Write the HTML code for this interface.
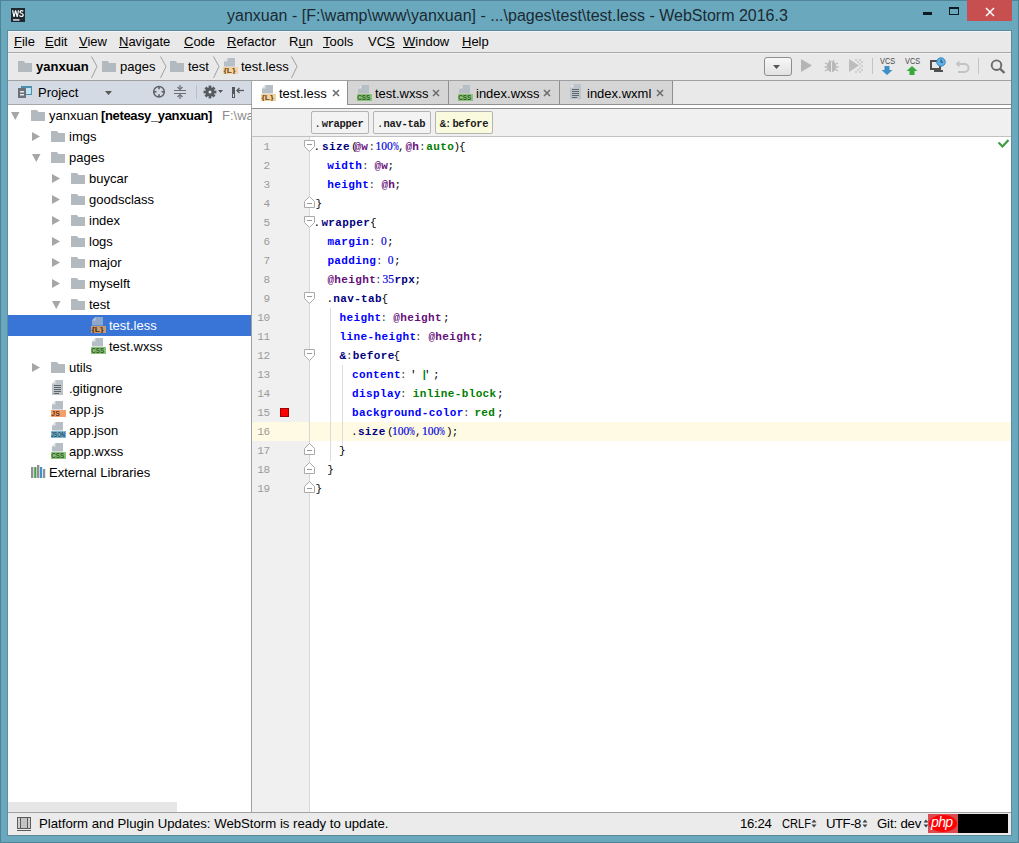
<!DOCTYPE html>
<html><head><meta charset="utf-8">
<style>
*{margin:0;padding:0;box-sizing:border-box}
html,body{width:1019px;height:843px;overflow:hidden;background:#6aa6c2;font-family:"Liberation Sans",sans-serif;font-size:13px;color:#000}
.a{position:absolute}
.t{position:absolute;white-space:pre;line-height:16px}
#frame{left:0;top:0;width:1019px;height:843px;background:#69a8bd;border:1px solid #4f8398}
#inner{left:7px;top:30px;width:1005px;height:806px;border:1px solid #5d8b9d}
#title{left:227px;top:6px;font-size:16px;color:#1c2a33;line-height:20px}
#menubar{left:8px;top:31px;width:1003px;height:22px;background:#e9e9e9;border-bottom:1px solid #a8a8a8;box-shadow:inset 0 1px 0 #eef5f8}
#menubar span{position:absolute;top:3px;line-height:16px}
#navbar{left:8px;top:53px;width:1003px;height:28px;background:#e9e9e9;border-bottom:1px solid #a0a0a0;box-shadow:inset 0 1px 0 #f3f3f3}
#proj{left:8px;top:81px;width:244px;height:24px;background:#d4dae4;border-bottom:1px solid #a8a8a8;border-right:1px solid #a8a8a8}
#tree{left:8px;top:105px;width:243px;height:707px;background:#fff}
#tabs{left:251px;top:81px;width:760px;height:27px;background:#ebebeb;border-left:1px solid #a8a8a8}
#crumbs{left:251px;top:108px;width:760px;height:29px;background:#f2f2f2;border-top:1px solid #a8a8a8;border-bottom:1px solid #c6c6c6;border-left:1px solid #a8a8a8}
#editor{left:251px;top:137px;width:760px;height:675px;background:#fff;border-left:1px solid #a0a0a0}
#gutter{left:252px;top:137px;width:57px;height:675px;background:#f0f0f0;border-right:1px solid #d5d5d5}
#status{left:8px;top:812px;width:1003px;height:23px;background:#ebebeb;border-top:1px solid #a0a0a0}
</style></head><body>
<div id="frame" class="a"></div><div id="inner" class="a"></div>
<div id="title" class="t">yanxuan - [F:\wamp\www\yanxuan] - ...\pages\test\test.less - WebStorm 2016.3</div>

<svg class="a" style="left:11px;top:8px" width="14" height="14" viewBox="0 0 14 14"><rect width="14" height="14" fill="#1d2830"/><path d="M1 2.2L2.4 9H3.6L4.6 4.8L5.6 9H6.8L8.1 2.2H6.9L6.2 6.6L5.2 2.2H4L3 6.6L2.3 2.2Z" fill="#fff"/><path d="M12.6 2.8C12 2.3 11.3 2.1 10.6 2.1C9.4 2.1 8.5 2.8 8.5 3.9C8.5 5 9.4 5.4 10.4 5.7C11.2 5.9 11.6 6.2 11.6 6.8C11.6 7.5 11 7.9 10.4 7.9C9.7 7.9 9.1 7.6 8.6 7.1L8 8.1C8.6 8.7 9.5 9.1 10.4 9.1C11.8 9.1 12.8 8.3 12.8 6.9C12.8 5.7 12 5.2 10.9 4.9C10.1 4.7 9.7 4.4 9.7 3.9C9.7 3.4 10.1 3.2 10.6 3.2C11.1 3.2 11.6 3.4 12 3.7Z" fill="#fff"/><rect x="2" y="11.3" width="6.5" height="1.3" fill="#fff"/></svg>
<div class="a" style="left:923px;top:12px;width:9px;height:3px;background:#0d1a22"></div>
<div class="a" style="left:949px;top:7px;width:10px;height:8px;border:1px solid #0d1a22;border-top-width:2px"></div>
<div class="a" style="left:967px;top:0px;width:45px;height:21px;background:#c74f4f"></div>
<svg class="a" style="left:984px;top:6px" width="12" height="12" viewBox="0 0 12 12"><path d="M2 2L10 10M10 2L2 10" stroke="#fff" stroke-width="1.5"/></svg>
<div id="menubar" class="a">
<span style="left:6px"><u>F</u>ile</span>
<span style="left:37px"><u>E</u>dit</span>
<span style="left:71px"><u>V</u>iew</span>
<span style="left:111px"><u>N</u>avigate</span>
<span style="left:176px"><u>C</u>ode</span>
<span style="left:219px"><u>R</u>efactor</span>
<span style="left:281px">R<u>u</u>n</span>
<span style="left:315px"><u>T</u>ools</span>
<span style="left:360px">VC<u>S</u></span>
<span style="left:395px"><u>W</u>indow</span>
<span style="left:454px"><u>H</u>elp</span>
</div>
<div id="navbar" class="a"></div>
<svg class="a" style="left:18px;top:61px" width="14" height="11" viewBox="0 0 14 11"><path d="M0 0H6L7 2H14V11H0Z" fill="#b2b9bf"/></svg><div class="t" style="left:36px;top:59px;font-weight:bold;font-size:13px">yanxuan</div><svg class="a" style="left:91px;top:56px" width="7" height="23" viewBox="0 0 7 23"><path d="M0.5 0.5L6 10.5L0.5 22" stroke="#a0a0a0" stroke-width="1" fill="none"/></svg><svg class="a" style="left:102px;top:61px" width="14" height="11" viewBox="0 0 14 11"><path d="M0 0H6L7 2H14V11H0Z" fill="#b2b9bf"/></svg><div class="t" style="left:120px;top:59px">pages</div><svg class="a" style="left:160px;top:56px" width="7" height="23" viewBox="0 0 7 23"><path d="M0.5 0.5L6 10.5L0.5 22" stroke="#a0a0a0" stroke-width="1" fill="none"/></svg><svg class="a" style="left:170px;top:61px" width="14" height="11" viewBox="0 0 14 11"><path d="M0 0H6L7 2H14V11H0Z" fill="#b2b9bf"/></svg><div class="t" style="left:188px;top:59px">test</div><svg class="a" style="left:213px;top:56px" width="7" height="23" viewBox="0 0 7 23"><path d="M0.5 0.5L6 10.5L0.5 22" stroke="#a0a0a0" stroke-width="1" fill="none"/></svg><!--NAVLESS--><svg class="a" style="left:222px;top:58px" width="17" height="16" viewBox="0 0 17 16"><path d="M5.5 0H13V8.5H2V3.5Z" fill="#b6bec6"/><path d="M2 3.5L5.5 0V3.5Z" fill="#e0e4e7"/><rect x="1" y="9" width="15" height="7" fill="#f4d39f"/><text x="1.5" y="15.2" textLength="12" lengthAdjust="spacingAndGlyphs" font-family="Liberation Sans" font-weight="bold" font-size="7.5" fill="#6b4a1c">{L}</text></svg><!--/NAVLESS--><div class="t" style="left:241px;top:59px">test.less</div><svg class="a" style="left:291px;top:56px" width="7" height="23" viewBox="0 0 7 23"><path d="M0.5 0.5L6 10.5L0.5 22" stroke="#a0a0a0" stroke-width="1" fill="none"/></svg>

<div class="a" style="left:764px;top:57px;width:28px;height:19px;border:1px solid #8d8d8d;border-radius:3px;background:linear-gradient(#f7f7f7,#e2e2e2)"></div>
<svg class="a" style="left:773px;top:65px" width="8" height="5" viewBox="0 0 8 5"><path d="M0 0H7L3.5 4Z" fill="#555"/></svg>
<svg class="a" style="left:801px;top:59px" width="12" height="14" viewBox="0 0 12 14"><path d="M0 0L11 6.5L0 13Z" fill="#b5b5b5"/></svg>
<svg class="a" style="left:824px;top:58px" width="15" height="15" viewBox="0 0 15 15"><ellipse cx="7.5" cy="8.5" rx="4.5" ry="5.5" fill="#b8b8b8"/><path d="M1 5L4 6.5M14 5L11 6.5M0.5 9H3M14.5 9H12M1 13L4 11M14 13L11 11M5 2L6 4M10 2L9 4" stroke="#b8b8b8" stroke-width="1.3"/><path d="M7.5 4V14" stroke="#e6e6e6" stroke-width="1"/></svg>
<svg class="a" style="left:849px;top:58px" width="14" height="15" viewBox="0 0 14 15"><path d="M0 1L10 7.5L0 14Z" fill="#bdbdbd"/><g fill="#cfcfcf"><rect x="6" y="1" width="2" height="2"/><rect x="10" y="1" width="2" height="2"/><rect x="8" y="3" width="2" height="2"/><rect x="12" y="3" width="2" height="2"/><rect x="10" y="5" width="2" height="2"/><rect x="12" y="7" width="2" height="2"/><rect x="10" y="9" width="2" height="2"/><rect x="8" y="11" width="2" height="2"/><rect x="12" y="11" width="2" height="2"/><rect x="6" y="13" width="2" height="2"/><rect x="10" y="13" width="2" height="2"/></g></svg>
<div class="a" style="left:872px;top:58px;width:1px;height:16px;background:#c4c4c4"></div>
<div class="t" style="left:880px;top:56px;font-size:9px;line-height:11px;color:#4a4a4a;transform:scaleX(0.82);transform-origin:0 0">VCS</div>
<svg class="a" style="left:881px;top:66px" width="12" height="9" viewBox="0 0 12 9"><path d="M3.5 0H8.5V4H11.5L6 9L0.5 4H3.5Z" fill="#3e8fc7"/></svg>
<div class="t" style="left:905px;top:56px;font-size:9px;line-height:11px;color:#4a4a4a;transform:scaleX(0.82);transform-origin:0 0">VCS</div>
<svg class="a" style="left:906px;top:66px" width="12" height="9" viewBox="0 0 12 9"><path d="M3.5 9H8.5V5H11.5L6 0L0.5 5H3.5Z" fill="#3aa63e"/></svg>
<svg class="a" style="left:930px;top:57px" width="16" height="16" viewBox="0 0 16 16"><rect x="1" y="4" width="9" height="8" fill="none" stroke="#505050" stroke-width="2"/><rect x="4" y="13" width="9" height="2" fill="#505050"/><circle cx="11" cy="5" r="4.3" fill="#5fb0e6" stroke="#2f7fb8" stroke-width="0.8"/><path d="M11 2.5V5.2H13" stroke="#1d3f5c" stroke-width="0.9" fill="none"/></svg>
<svg class="a" style="left:955px;top:60px" width="15" height="13" viewBox="0 0 15 13"><path d="M4 4H9.5A4 4 0 0 1 9.5 12H3" stroke="#c3c3c3" stroke-width="2" fill="none"/><path d="M0.5 4L4.5 0.5V7.5Z" fill="#c3c3c3"/></svg>
<div class="a" style="left:978px;top:58px;width:1px;height:16px;background:#c4c4c4"></div>
<svg class="a" style="left:990px;top:59px" width="16" height="15" viewBox="0 0 16 15"><circle cx="6.5" cy="6.2" r="4.8" fill="none" stroke="#6a6a6a" stroke-width="1.9"/><path d="M10 9.7L14.5 14" stroke="#6a6a6a" stroke-width="2.4"/></svg>
<div id="proj" class="a"></div>

<svg class="a" style="left:17px;top:85px" width="16" height="14" viewBox="0 0 16 14"><rect x="4.5" y="1.5" width="10" height="8" fill="#bfe3f2" stroke="#4a8fae" stroke-width="1"/><rect x="4.5" y="1" width="10" height="2" fill="#4a8fae"/><rect x="1" y="3" width="8" height="10" fill="#6b7177"/><rect x="3" y="6" width="4" height="1.5" fill="#e8e8e8"/><rect x="3" y="9" width="4" height="1.5" fill="#e8e8e8"/></svg>
<div class="t" style="left:38px;top:85px">Project</div>
<svg class="a" style="left:105px;top:91px" width="8" height="5" viewBox="0 0 8 5"><path d="M0 0H7L3.5 4Z" fill="#555"/></svg>
<svg class="a" style="left:152px;top:85px" width="14" height="14" viewBox="0 0 14 14"><circle cx="7" cy="6.8" r="5.3" fill="none" stroke="#5d6166" stroke-width="1.5"/><path d="M7 1.5V4.3M7 9.3V12.1M1.7 6.8H4.5M9.5 6.8H12.3" stroke="#5d6166" stroke-width="1.6"/></svg>
<svg class="a" style="left:173px;top:84px" width="14" height="16" viewBox="0 0 14 16"><path d="M1 6.5H13M1 9.5H13" stroke="#6a6e73" stroke-width="1.2"/><path d="M7 1V5M7 11V15" stroke="#6a6e73" stroke-width="1.2"/><path d="M4.5 3L7 5.5L9.5 3M4.5 13L7 10.5L9.5 13" stroke="#6a6e73" stroke-width="1.2" fill="none"/></svg>
<div class="a" style="left:196px;top:85px;width:1px;height:14px;background:#b9bfc8"></div>
<svg class="a" style="left:203px;top:85px" width="14" height="14" viewBox="0 0 14 14"><rect x="5.6" y="0.6" width="2.8" height="12.8" fill="#555a5e" transform="rotate(0 7 7)"/><rect x="5.6" y="0.6" width="2.8" height="12.8" fill="#555a5e" transform="rotate(45 7 7)"/><rect x="5.6" y="0.6" width="2.8" height="12.8" fill="#555a5e" transform="rotate(90 7 7)"/><rect x="5.6" y="0.6" width="2.8" height="12.8" fill="#555a5e" transform="rotate(135 7 7)"/><circle cx="7" cy="7" r="4.4" fill="#555a5e"/><circle cx="7" cy="7" r="1.5" fill="#e6e6e6"/></svg>
<svg class="a" style="left:218px;top:90px" width="6" height="4" viewBox="0 0 6 4"><path d="M0 0H5L2.5 3Z" fill="#555"/></svg>
<svg class="a" style="left:231px;top:86px" width="14" height="13" viewBox="0 0 14 13"><rect x="1" y="1" width="3" height="11" fill="#55595d"/><rect x="2" y="8" width="1" height="3" fill="#e0e0e0"/><path d="M6 4.5H13" stroke="#55595d" stroke-width="1.3"/><path d="M8.5 2L6 4.5L8.5 7" stroke="#55595d" stroke-width="1.3" fill="none"/></svg>
<div id="tree" class="a"></div>
<!--TREE--><div class="a" style="left:8px;top:315px;width:243px;height:21px;background:#3875d7"></div><svg class="a" style="left:11px;top:112px" width="10" height="9" viewBox="0 0 10 9"><path d="M0 0H8.5L4.25 8Z" fill="#a6a6a6"/></svg><svg class="a" style="left:31px;top:110px" width="14" height="11" viewBox="0 0 14 11"><path d="M0 0H6L7.5 2H14V11H0Z" fill="#b2b9bf"/></svg><div class="t" style="left:49px;top:108px">yanxuan</div><div class="t" style="left:101px;top:108px;font-weight:bold;letter-spacing:-0.35px">[neteasy_yanxuan]</div><div class="t" style="left:222px;top:108px;color:#8c8c8c">F:\wa</div><svg class="a" style="left:32px;top:132px" width="9" height="10" viewBox="0 0 9 10"><path d="M0 0L8 4.5L0 9Z" fill="#a6a6a6"/></svg><svg class="a" style="left:51px;top:131px" width="14" height="11" viewBox="0 0 14 11"><path d="M0 0H6L7.5 2H14V11H0Z" fill="#b2b9bf"/></svg><div class="t" style="left:69px;top:129px;color:#000">imgs</div><svg class="a" style="left:32px;top:154px" width="10" height="9" viewBox="0 0 10 9"><path d="M0 0H8.5L4.25 8Z" fill="#a6a6a6"/></svg><svg class="a" style="left:51px;top:152px" width="14" height="11" viewBox="0 0 14 11"><path d="M0 0H6L7.5 2H14V11H0Z" fill="#b2b9bf"/></svg><div class="t" style="left:69px;top:150px;color:#000">pages</div><svg class="a" style="left:52px;top:174px" width="9" height="10" viewBox="0 0 9 10"><path d="M0 0L8 4.5L0 9Z" fill="#a6a6a6"/></svg><svg class="a" style="left:71px;top:173px" width="14" height="11" viewBox="0 0 14 11"><path d="M0 0H6L7.5 2H14V11H0Z" fill="#b2b9bf"/></svg><div class="t" style="left:89px;top:171px;color:#000">buycar</div><svg class="a" style="left:52px;top:195px" width="9" height="10" viewBox="0 0 9 10"><path d="M0 0L8 4.5L0 9Z" fill="#a6a6a6"/></svg><svg class="a" style="left:71px;top:194px" width="14" height="11" viewBox="0 0 14 11"><path d="M0 0H6L7.5 2H14V11H0Z" fill="#b2b9bf"/></svg><div class="t" style="left:89px;top:192px;color:#000">goodsclass</div><svg class="a" style="left:52px;top:216px" width="9" height="10" viewBox="0 0 9 10"><path d="M0 0L8 4.5L0 9Z" fill="#a6a6a6"/></svg><svg class="a" style="left:71px;top:215px" width="14" height="11" viewBox="0 0 14 11"><path d="M0 0H6L7.5 2H14V11H0Z" fill="#b2b9bf"/></svg><div class="t" style="left:89px;top:213px;color:#000">index</div><svg class="a" style="left:52px;top:237px" width="9" height="10" viewBox="0 0 9 10"><path d="M0 0L8 4.5L0 9Z" fill="#a6a6a6"/></svg><svg class="a" style="left:71px;top:236px" width="14" height="11" viewBox="0 0 14 11"><path d="M0 0H6L7.5 2H14V11H0Z" fill="#b2b9bf"/></svg><div class="t" style="left:89px;top:234px;color:#000">logs</div><svg class="a" style="left:52px;top:258px" width="9" height="10" viewBox="0 0 9 10"><path d="M0 0L8 4.5L0 9Z" fill="#a6a6a6"/></svg><svg class="a" style="left:71px;top:257px" width="14" height="11" viewBox="0 0 14 11"><path d="M0 0H6L7.5 2H14V11H0Z" fill="#b2b9bf"/></svg><div class="t" style="left:89px;top:255px;color:#000">major</div><svg class="a" style="left:52px;top:279px" width="9" height="10" viewBox="0 0 9 10"><path d="M0 0L8 4.5L0 9Z" fill="#a6a6a6"/></svg><svg class="a" style="left:71px;top:278px" width="14" height="11" viewBox="0 0 14 11"><path d="M0 0H6L7.5 2H14V11H0Z" fill="#b2b9bf"/></svg><div class="t" style="left:89px;top:276px;color:#000">myselft</div><svg class="a" style="left:52px;top:301px" width="10" height="9" viewBox="0 0 10 9"><path d="M0 0H8.5L4.25 8Z" fill="#a6a6a6"/></svg><svg class="a" style="left:71px;top:299px" width="14" height="11" viewBox="0 0 14 11"><path d="M0 0H6L7.5 2H14V11H0Z" fill="#b2b9bf"/></svg><div class="t" style="left:89px;top:297px;color:#000">test</div><svg class="a" style="left:90px;top:317px" width="17" height="16" viewBox="0 0 17 16"><path d="M5.5 0H13V8.5H2V3.5Z" fill="#8ea6cc"/><path d="M2 3.5L5.5 0V3.5Z" fill="#b5c8e8"/><rect x="1" y="9" width="15" height="7" fill="#c79a72"/><text x="1.5" y="15.2" textLength="12" lengthAdjust="spacingAndGlyphs" font-family="Liberation Sans" font-weight="bold" font-size="7.5" fill="#4a2e10">{L}</text></svg><div class="t" style="left:109px;top:318px;color:#fff">test.less</div><svg class="a" style="left:90px;top:338px" width="17" height="16" viewBox="0 0 17 16"><path d="M5.5 0H13V8.5H2V3.5Z" fill="#b6bec6"/><path d="M2 3.5L5.5 0V3.5Z" fill="#e0e4e7"/><rect x="1" y="9" width="15" height="7" fill="#8cc27a"/><text x="1.3" y="15.2" textLength="13" lengthAdjust="spacingAndGlyphs" font-family="Liberation Sans" font-weight="bold" font-size="7.5" fill="#2a5a1e">CSS</text></svg><div class="t" style="left:109px;top:339px;color:#000">test.wxss</div><svg class="a" style="left:32px;top:363px" width="9" height="10" viewBox="0 0 9 10"><path d="M0 0L8 4.5L0 9Z" fill="#a6a6a6"/></svg><svg class="a" style="left:51px;top:362px" width="14" height="11" viewBox="0 0 14 11"><path d="M0 0H6L7.5 2H14V11H0Z" fill="#b2b9bf"/></svg><div class="t" style="left:69px;top:360px;color:#000">utils</div><svg class="a" style="left:50px;top:380px" width="17" height="16" viewBox="0 0 17 16"><path d="M5.5 0H13V15H2V3.5Z" fill="#bcc3c9"/><path d="M2 3.5L5.5 0V3.5Z" fill="#e3e6e9"/><path d="M4 5.5H11M4 7.5H11M4 9.5H11M4 11.5H11M4 13.5H9" stroke="#5f666c" stroke-width="1"/></svg><div class="t" style="left:69px;top:381px;color:#000">.gitignore</div><svg class="a" style="left:50px;top:401px" width="17" height="16" viewBox="0 0 17 16"><path d="M5.5 0H13V8.5H2V3.5Z" fill="#b6bec6"/><path d="M2 3.5L5.5 0V3.5Z" fill="#e0e4e7"/><rect x="1" y="9" width="15" height="7" fill="#f4a06c"/><text x="1.3" y="15.2" textLength="8.5" lengthAdjust="spacingAndGlyphs" font-family="Liberation Sans" font-weight="bold" font-size="7.5" fill="#6b3414">JS</text></svg><div class="t" style="left:69px;top:402px;color:#000">app.js</div><svg class="a" style="left:50px;top:422px" width="17" height="16" viewBox="0 0 17 16"><path d="M5.5 0H13V8.5H2V3.5Z" fill="#b6bec6"/><path d="M2 3.5L5.5 0V3.5Z" fill="#e0e4e7"/><rect x="1" y="9" width="15" height="7" fill="#80b8d2"/><text x="1.0" y="15.2" textLength="14" lengthAdjust="spacingAndGlyphs" font-family="Liberation Sans" font-weight="bold" font-size="7.5" fill="#1b4a62">JSON</text></svg><div class="t" style="left:69px;top:423px;color:#000">app.json</div><svg class="a" style="left:50px;top:443px" width="17" height="16" viewBox="0 0 17 16"><path d="M5.5 0H13V8.5H2V3.5Z" fill="#b6bec6"/><path d="M2 3.5L5.5 0V3.5Z" fill="#e0e4e7"/><rect x="1" y="9" width="15" height="7" fill="#8cc27a"/><text x="1.3" y="15.2" textLength="13" lengthAdjust="spacingAndGlyphs" font-family="Liberation Sans" font-weight="bold" font-size="7.5" fill="#2a5a1e">CSS</text></svg><div class="t" style="left:69px;top:444px;color:#000">app.wxss</div><svg class="a" style="left:31px;top:464px" width="15" height="15" viewBox="0 0 15 15"><rect x="0" y="3" width="2.4" height="11" fill="#8e9193"/><rect x="3.2" y="3" width="2.2" height="11" fill="#4f9b4f"/><rect x="6" y="1" width="2.4" height="13" fill="#8e9193"/><rect x="9" y="3" width="2.2" height="11" fill="#3f93cc"/><rect x="12" y="5" width="2.2" height="9" fill="#8e9193"/></svg><div class="t" style="left:49px;top:465px">External Libraries</div><!--/TREE-->
<!--TABS--><div class="a" style="left:251px;top:81px;width:760px;height:23px;background:#e9e9e9;border-left:1px solid #a8a8a8"></div><div class="a" style="left:251px;top:104px;width:760px;height:1px;background:#8f8f8f"></div><div class="a" style="left:251px;top:105px;width:760px;height:3px;background:#fff;border-left:1px solid #a8a8a8"></div><div class="a" style="left:347px;top:81px;width:102px;height:24px;background:#d5d5d5;border:1px solid #8f8f8f;border-top:none"></div><div class="a" style="left:448px;top:81px;width:112px;height:24px;background:#d5d5d5;border:1px solid #8f8f8f;border-top:none"></div><div class="a" style="left:559px;top:81px;width:114px;height:24px;background:#d5d5d5;border:1px solid #8f8f8f;border-top:none"></div><div class="a" style="left:252px;top:81px;width:95px;height:27px;background:#fff"></div><svg class="a" style="left:260px;top:85px" width="17" height="16" viewBox="0 0 17 16"><path d="M5.5 0H13V8.5H2V3.5Z" fill="#b6bec6"/><path d="M2 3.5L5.5 0V3.5Z" fill="#e0e4e7"/><rect x="1" y="9" width="15" height="7" fill="#f4d39f"/><text x="1.5" y="15.2" textLength="12" lengthAdjust="spacingAndGlyphs" font-family="Liberation Sans" font-weight="bold" font-size="7.5" fill="#6b4a1c">{L}</text></svg><div class="t" style="left:279px;top:86px">test.less</div><svg class="a" style="left:332px;top:89px" width="8" height="8" viewBox="0 0 8 8"><path d="M1 1L7 7M7 1L1 7" stroke="#6e6e6e" stroke-width="1.6"/></svg><svg class="a" style="left:356px;top:85px" width="17" height="16" viewBox="0 0 17 16"><path d="M5.5 0H13V8.5H2V3.5Z" fill="#b6bec6"/><path d="M2 3.5L5.5 0V3.5Z" fill="#e0e4e7"/><rect x="1" y="9" width="15" height="7" fill="#8cc27a"/><text x="1.3" y="15.2" textLength="13" lengthAdjust="spacingAndGlyphs" font-family="Liberation Sans" font-weight="bold" font-size="7.5" fill="#2a5a1e">CSS</text></svg><div class="t" style="left:375px;top:86px">test.wxss</div><svg class="a" style="left:432px;top:89px" width="8" height="8" viewBox="0 0 8 8"><path d="M1 1L7 7M7 1L1 7" stroke="#6e6e6e" stroke-width="1.6"/></svg><svg class="a" style="left:457px;top:85px" width="17" height="16" viewBox="0 0 17 16"><path d="M5.5 0H13V8.5H2V3.5Z" fill="#b6bec6"/><path d="M2 3.5L5.5 0V3.5Z" fill="#e0e4e7"/><rect x="1" y="9" width="15" height="7" fill="#8cc27a"/><text x="1.3" y="15.2" textLength="13" lengthAdjust="spacingAndGlyphs" font-family="Liberation Sans" font-weight="bold" font-size="7.5" fill="#2a5a1e">CSS</text></svg><div class="t" style="left:476px;top:86px">index.wxss</div><svg class="a" style="left:543px;top:89px" width="8" height="8" viewBox="0 0 8 8"><path d="M1 1L7 7M7 1L1 7" stroke="#6e6e6e" stroke-width="1.6"/></svg><svg class="a" style="left:568px;top:84px" width="17" height="16" viewBox="0 0 17 16"><path d="M5.5 0H13V15H2V3.5Z" fill="#bcc3c9"/><path d="M2 3.5L5.5 0V3.5Z" fill="#e3e6e9"/><path d="M4 5.5H11M4 7.5H11M4 9.5H11M4 11.5H11M4 13.5H9" stroke="#5f666c" stroke-width="1"/></svg><div class="t" style="left:587px;top:86px">index.wxml</div><svg class="a" style="left:656px;top:89px" width="8" height="8" viewBox="0 0 8 8"><path d="M1 1L7 7M7 1L1 7" stroke="#6e6e6e" stroke-width="1.6"/></svg><div class="a" style="left:251px;top:108px;width:760px;height:29px;background:#f0f0f0;border-top:1px solid #8f8f8f;border-bottom:1px solid #c2c2c2;border-left:1px solid #a8a8a8"></div><div class="a" style="left:311px;top:111px;width:58px;height:23px;background:#f3f3f3;border:1px solid #b4b4b4;border-radius:2px"></div><div class="a" style="left:373px;top:111px;width:58px;height:23px;background:#f3f3f3;border:1px solid #b4b4b4;border-radius:2px"></div><div class="a" style="left:435px;top:111px;width:58px;height:23px;background:#fafade;border:1px solid #b4b4b4;border-radius:2px"></div><div class="t" style="left:314.5px;top:116px;font-family:'Liberation Mono';color:#1a1a1a;font-size:10.5px">.</div><div class="t" style="left:321.7px;top:116px;font-family:'Liberation Mono';color:#1a1a1a;font-weight:bold;font-size:10.5px;letter-spacing:-0.35px">wrapper</div><div class="t" style="left:376.9px;top:116px;font-family:'Liberation Mono';color:#1a1a1a;font-size:10.5px">.</div><div class="t" style="left:383.6px;top:116px;font-family:'Liberation Mono';color:#1a1a1a;font-weight:bold;font-size:10.5px;letter-spacing:-0.35px">nav-tab</div><div class="t" style="left:439.7px;top:116px;font-family:'Liberation Mono';color:#1a1a1a;font-weight:bold;font-size:10.5px;letter-spacing:-0.35px">&amp;</div><div class="t" style="left:445.0px;top:116px;font-family:'Liberation Mono';color:#1a1a1a;font-size:10.5px">:</div><div class="t" style="left:452.4px;top:116px;font-family:'Liberation Mono';color:#1a1a1a;font-weight:bold;font-size:10.5px;letter-spacing:-0.35px">before</div><!--/TABS-->
<div id="editor" class="a"></div>
<!--CODE--><div class="a" style="left:252px;top:422px;width:759px;height:19px;background:#fffae3"></div><div class="a" style="left:252px;top:137px;width:57px;height:285px;background:#f0f0f0"></div><div class="a" style="left:252px;top:441px;width:57px;height:371px;background:#f0f0f0"></div><div class="a" style="left:309px;top:137px;width:1px;height:675px;background:#d7d7d7"></div><svg class="a" style="left:304px;top:140px" width="12" height="13" viewBox="0 0 12 13"><path d="M0.5 0.5H10.5V6.5L5.5 11.5L0.5 6.5Z" fill="#fff" stroke="#aaa" stroke-width="1"/><path d="M3 4.5H8" stroke="#999" stroke-width="1"/></svg><svg class="a" style="left:304px;top:216px" width="12" height="13" viewBox="0 0 12 13"><path d="M0.5 0.5H10.5V6.5L5.5 11.5L0.5 6.5Z" fill="#fff" stroke="#aaa" stroke-width="1"/><path d="M3 4.5H8" stroke="#999" stroke-width="1"/></svg><svg class="a" style="left:304px;top:292px" width="12" height="13" viewBox="0 0 12 13"><path d="M0.5 0.5H10.5V6.5L5.5 11.5L0.5 6.5Z" fill="#fff" stroke="#aaa" stroke-width="1"/><path d="M3 4.5H8" stroke="#999" stroke-width="1"/></svg><svg class="a" style="left:304px;top:349px" width="12" height="13" viewBox="0 0 12 13"><path d="M0.5 0.5H10.5V6.5L5.5 11.5L0.5 6.5Z" fill="#fff" stroke="#aaa" stroke-width="1"/><path d="M3 4.5H8" stroke="#999" stroke-width="1"/></svg><svg class="a" style="left:304px;top:195px" width="12" height="13" viewBox="0 0 12 13"><path d="M0.5 12.5H10.5V6.5L5.5 1.5L0.5 6.5Z" fill="#fff" stroke="#aaa" stroke-width="1"/><path d="M3 8.5H8" stroke="#999" stroke-width="1"/></svg><svg class="a" style="left:304px;top:442px" width="12" height="13" viewBox="0 0 12 13"><path d="M0.5 12.5H10.5V6.5L5.5 1.5L0.5 6.5Z" fill="#fff" stroke="#aaa" stroke-width="1"/><path d="M3 8.5H8" stroke="#999" stroke-width="1"/></svg><svg class="a" style="left:304px;top:461px" width="12" height="13" viewBox="0 0 12 13"><path d="M0.5 12.5H10.5V6.5L5.5 1.5L0.5 6.5Z" fill="#fff" stroke="#aaa" stroke-width="1"/><path d="M3 8.5H8" stroke="#999" stroke-width="1"/></svg><svg class="a" style="left:304px;top:480px" width="12" height="13" viewBox="0 0 12 13"><path d="M0.5 12.5H10.5V6.5L5.5 1.5L0.5 6.5Z" fill="#fff" stroke="#aaa" stroke-width="1"/><path d="M3 8.5H8" stroke="#999" stroke-width="1"/></svg><div class="a" style="left:330px;top:308px;width:1px;height:153px;background:#dcdcdc"></div><div class="a" style="left:342px;top:365px;width:1px;height:82px;background:#dcdcdc"></div><svg class="a" style="left:997px;top:138px" width="13" height="11" viewBox="0 0 13 11"><path d="M1.5 4.5L5.5 8.5L11.5 2" stroke="#3f9a45" stroke-width="2.2" fill="none"/></svg><div class="a" style="left:280px;top:408px;width:9px;height:9px;background:#ff0000;border:1px solid #9a0000"></div><div class="t" style="left:252px;top:138px;width:17.5px;text-align:right;font-family:'Liberation Mono';font-size:11px;line-height:19px;color:#9a9a9a;letter-spacing:-0.5px">1</div><div class="t" style="left:252px;top:157px;width:17.5px;text-align:right;font-family:'Liberation Mono';font-size:11px;line-height:19px;color:#9a9a9a;letter-spacing:-0.5px">2</div><div class="t" style="left:252px;top:176px;width:17.5px;text-align:right;font-family:'Liberation Mono';font-size:11px;line-height:19px;color:#9a9a9a;letter-spacing:-0.5px">3</div><div class="t" style="left:252px;top:195px;width:17.5px;text-align:right;font-family:'Liberation Mono';font-size:11px;line-height:19px;color:#9a9a9a;letter-spacing:-0.5px">4</div><div class="t" style="left:252px;top:214px;width:17.5px;text-align:right;font-family:'Liberation Mono';font-size:11px;line-height:19px;color:#9a9a9a;letter-spacing:-0.5px">5</div><div class="t" style="left:252px;top:233px;width:17.5px;text-align:right;font-family:'Liberation Mono';font-size:11px;line-height:19px;color:#9a9a9a;letter-spacing:-0.5px">6</div><div class="t" style="left:252px;top:252px;width:17.5px;text-align:right;font-family:'Liberation Mono';font-size:11px;line-height:19px;color:#9a9a9a;letter-spacing:-0.5px">7</div><div class="t" style="left:252px;top:271px;width:17.5px;text-align:right;font-family:'Liberation Mono';font-size:11px;line-height:19px;color:#9a9a9a;letter-spacing:-0.5px">8</div><div class="t" style="left:252px;top:290px;width:17.5px;text-align:right;font-family:'Liberation Mono';font-size:11px;line-height:19px;color:#9a9a9a;letter-spacing:-0.5px">9</div><div class="t" style="left:252px;top:309px;width:17.5px;text-align:right;font-family:'Liberation Mono';font-size:11px;line-height:19px;color:#9a9a9a;letter-spacing:-0.5px">10</div><div class="t" style="left:252px;top:328px;width:17.5px;text-align:right;font-family:'Liberation Mono';font-size:11px;line-height:19px;color:#9a9a9a;letter-spacing:-0.5px">11</div><div class="t" style="left:252px;top:347px;width:17.5px;text-align:right;font-family:'Liberation Mono';font-size:11px;line-height:19px;color:#9a9a9a;letter-spacing:-0.5px">12</div><div class="t" style="left:252px;top:366px;width:17.5px;text-align:right;font-family:'Liberation Mono';font-size:11px;line-height:19px;color:#9a9a9a;letter-spacing:-0.5px">13</div><div class="t" style="left:252px;top:385px;width:17.5px;text-align:right;font-family:'Liberation Mono';font-size:11px;line-height:19px;color:#9a9a9a;letter-spacing:-0.5px">14</div><div class="t" style="left:252px;top:404px;width:17.5px;text-align:right;font-family:'Liberation Mono';font-size:11px;line-height:19px;color:#9a9a9a;letter-spacing:-0.5px">15</div><div class="t" style="left:252px;top:423px;width:17.5px;text-align:right;font-family:'Liberation Mono';font-size:11px;line-height:19px;color:#9a9a9a;letter-spacing:-0.5px">16</div><div class="t" style="left:252px;top:442px;width:17.5px;text-align:right;font-family:'Liberation Mono';font-size:11px;line-height:19px;color:#9a9a9a;letter-spacing:-0.5px">17</div><div class="t" style="left:252px;top:461px;width:17.5px;text-align:right;font-family:'Liberation Mono';font-size:11px;line-height:19px;color:#9a9a9a;letter-spacing:-0.5px">18</div><div class="t" style="left:252px;top:480px;width:17.5px;text-align:right;font-family:'Liberation Mono';font-size:11px;line-height:19px;color:#9a9a9a;letter-spacing:-0.5px">19</div><div class="t" style="left:313.5px;top:138px;font-family:'Liberation Mono';font-size:11px;line-height:19px;color:#000000;letter-spacing:-0.3px">.</div><div class="t" style="left:322.0px;top:138px;font-family:'Liberation Mono';font-size:11px;line-height:19px;color:#000080;font-weight:bold;letter-spacing:0.38px">size</div><div class="t" style="left:351.1px;top:138px;font-family:'Liberation Mono';font-size:11px;line-height:19px;color:#000000;letter-spacing:-0.3px">(</div><div class="t" style="left:354.4px;top:138px;font-family:'Liberation Mono';font-size:11px;line-height:19px;color:#660e7a;font-weight:bold;letter-spacing:0.38px">@w</div><div class="t" style="left:368.5px;top:138px;font-family:'Liberation Mono';font-size:11px;line-height:19px;color:#444;letter-spacing:-0.3px">:</div><div class="t" style="left:375.5px;top:137px;font-family:'Liberation Mono';font-size:11.5px;line-height:19px;color:#0000ff;letter-spacing:0px;font-family:'Liberation Serif';-webkit-text-stroke:0.2px #10109a">100<span style="display:inline-block;transform:scaleX(0.6);transform-origin:0 0">%</span></div><div class="t" style="left:398.0px;top:138px;font-family:'Liberation Mono';font-size:11px;line-height:19px;color:#000000;letter-spacing:-0.3px">,</div><div class="t" style="left:405.4px;top:138px;font-family:'Liberation Mono';font-size:11px;line-height:19px;color:#660e7a;font-weight:bold;letter-spacing:0.38px">@h</div><div class="t" style="left:419.0px;top:138px;font-family:'Liberation Mono';font-size:11px;line-height:19px;color:#444;letter-spacing:-0.3px">:</div><div class="t" style="left:426.2px;top:138px;font-family:'Liberation Mono';font-size:11px;line-height:19px;color:#008000;font-weight:bold;letter-spacing:0.38px">auto</div><div class="t" style="left:453.5px;top:138px;font-family:'Liberation Mono';font-size:11px;line-height:19px;color:#000000;letter-spacing:-0.3px">)</div><div class="t" style="left:459.0px;top:138px;font-family:'Liberation Mono';font-size:11px;line-height:19px;color:#000000;letter-spacing:-0.3px">{</div><div class="t" style="left:327.3px;top:157px;font-family:'Liberation Mono';font-size:11px;line-height:19px;color:#0000ff;font-weight:bold;letter-spacing:0.38px">width</div><div class="t" style="left:362.0px;top:157px;font-family:'Liberation Mono';font-size:11px;line-height:19px;color:#444;letter-spacing:-0.3px">:</div><div class="t" style="left:374.4px;top:157px;font-family:'Liberation Mono';font-size:11px;line-height:19px;color:#660e7a;font-weight:bold;letter-spacing:0.38px">@w</div><div class="t" style="left:387.5px;top:157px;font-family:'Liberation Mono';font-size:11px;line-height:19px;color:#000000;letter-spacing:-0.3px">;</div><div class="t" style="left:327.3px;top:176px;font-family:'Liberation Mono';font-size:11px;line-height:19px;color:#0000ff;font-weight:bold;letter-spacing:0.38px">height</div><div class="t" style="left:368.5px;top:176px;font-family:'Liberation Mono';font-size:11px;line-height:19px;color:#444;letter-spacing:-0.3px">:</div><div class="t" style="left:381.4px;top:176px;font-family:'Liberation Mono';font-size:11px;line-height:19px;color:#660e7a;font-weight:bold;letter-spacing:0.38px">@h</div><div class="t" style="left:394.5px;top:176px;font-family:'Liberation Mono';font-size:11px;line-height:19px;color:#000000;letter-spacing:-0.3px">;</div><div class="t" style="left:315.5px;top:195px;font-family:'Liberation Mono';font-size:11px;line-height:19px;color:#000000;letter-spacing:-0.3px">}</div><div class="t" style="left:313.5px;top:214px;font-family:'Liberation Mono';font-size:11px;line-height:19px;color:#000000;letter-spacing:-0.3px">.</div><div class="t" style="left:321.4px;top:214px;font-family:'Liberation Mono';font-size:11px;line-height:19px;color:#000080;font-weight:bold;letter-spacing:0.38px">wrapper</div><div class="t" style="left:370.0px;top:214px;font-family:'Liberation Mono';font-size:11px;line-height:19px;color:#000000;letter-spacing:-0.3px">{</div><div class="t" style="left:327.4px;top:233px;font-family:'Liberation Mono';font-size:11px;line-height:19px;color:#0000ff;font-weight:bold;letter-spacing:0.38px">margin</div><div class="t" style="left:369.0px;top:233px;font-family:'Liberation Mono';font-size:11px;line-height:19px;color:#444;letter-spacing:-0.3px">:</div><div class="t" style="left:381.1px;top:232px;font-family:'Liberation Mono';font-size:11.5px;line-height:19px;color:#0000ff;letter-spacing:0px;font-family:'Liberation Serif';-webkit-text-stroke:0.2px #10109a">0</div><div class="t" style="left:387.0px;top:233px;font-family:'Liberation Mono';font-size:11px;line-height:19px;color:#000000;letter-spacing:-0.3px">;</div><div class="t" style="left:327.4px;top:252px;font-family:'Liberation Mono';font-size:11px;line-height:19px;color:#0000ff;font-weight:bold;letter-spacing:0.38px">padding</div><div class="t" style="left:376.0px;top:252px;font-family:'Liberation Mono';font-size:11px;line-height:19px;color:#444;letter-spacing:-0.3px">:</div><div class="t" style="left:387.8px;top:251px;font-family:'Liberation Mono';font-size:11.5px;line-height:19px;color:#0000ff;letter-spacing:0px;font-family:'Liberation Serif';-webkit-text-stroke:0.2px #10109a">0</div><div class="t" style="left:394.0px;top:252px;font-family:'Liberation Mono';font-size:11px;line-height:19px;color:#000000;letter-spacing:-0.3px">;</div><div class="t" style="left:327.4px;top:271px;font-family:'Liberation Mono';font-size:11px;line-height:19px;color:#660e7a;font-weight:bold;letter-spacing:0.38px">@height</div><div class="t" style="left:375.0px;top:271px;font-family:'Liberation Mono';font-size:11px;line-height:19px;color:#444;letter-spacing:-0.3px">:</div><div class="t" style="left:382.5px;top:270px;font-family:'Liberation Mono';font-size:11.5px;line-height:19px;color:#0000ff;letter-spacing:0px;font-family:'Liberation Serif';-webkit-text-stroke:0.2px #10109a">35</div><div class="t" style="left:394.4px;top:271px;font-family:'Liberation Mono';font-size:11px;line-height:19px;color:#000080;font-weight:bold;letter-spacing:0.38px">rpx</div><div class="t" style="left:414.5px;top:271px;font-family:'Liberation Mono';font-size:11px;line-height:19px;color:#000000;letter-spacing:-0.3px">;</div><div class="t" style="left:326.5px;top:290px;font-family:'Liberation Mono';font-size:11px;line-height:19px;color:#000000;letter-spacing:-0.3px">.</div><div class="t" style="left:333.2px;top:290px;font-family:'Liberation Mono';font-size:11px;line-height:19px;color:#000080;font-weight:bold;letter-spacing:0.38px">nav-tab</div><div class="t" style="left:381.5px;top:290px;font-family:'Liberation Mono';font-size:11px;line-height:19px;color:#000000;letter-spacing:-0.3px">{</div><div class="t" style="left:339.6px;top:309px;font-family:'Liberation Mono';font-size:11px;line-height:19px;color:#0000ff;font-weight:bold;letter-spacing:0.38px">height</div><div class="t" style="left:380.5px;top:309px;font-family:'Liberation Mono';font-size:11px;line-height:19px;color:#444;letter-spacing:-0.3px">:</div><div class="t" style="left:393.2px;top:309px;font-family:'Liberation Mono';font-size:11px;line-height:19px;color:#660e7a;font-weight:bold;letter-spacing:0.38px">@height</div><div class="t" style="left:443.0px;top:309px;font-family:'Liberation Mono';font-size:11px;line-height:19px;color:#000000;letter-spacing:-0.3px">;</div><div class="t" style="left:339.6px;top:328px;font-family:'Liberation Mono';font-size:11px;line-height:19px;color:#0000ff;font-weight:bold;letter-spacing:0.38px">line-height</div><div class="t" style="left:415.0px;top:328px;font-family:'Liberation Mono';font-size:11px;line-height:19px;color:#444;letter-spacing:-0.3px">:</div><div class="t" style="left:428.4px;top:328px;font-family:'Liberation Mono';font-size:11px;line-height:19px;color:#660e7a;font-weight:bold;letter-spacing:0.38px">@height</div><div class="t" style="left:477.0px;top:328px;font-family:'Liberation Mono';font-size:11px;line-height:19px;color:#000000;letter-spacing:-0.3px">;</div><div class="t" style="left:339.6px;top:347px;font-family:'Liberation Mono';font-size:11px;line-height:19px;color:#000080;font-weight:bold;letter-spacing:0.38px">&amp;</div><div class="t" style="left:346.0px;top:347px;font-family:'Liberation Mono';font-size:11px;line-height:19px;color:#444;letter-spacing:-0.3px">:</div><div class="t" style="left:352.8px;top:347px;font-family:'Liberation Mono';font-size:11px;line-height:19px;color:#000080;font-weight:bold;letter-spacing:0.38px">before</div><div class="t" style="left:393.5px;top:347px;font-family:'Liberation Mono';font-size:11px;line-height:19px;color:#000000;letter-spacing:-0.3px">{</div><div class="t" style="left:352.0px;top:366px;font-family:'Liberation Mono';font-size:11px;line-height:19px;color:#0000ff;font-weight:bold;letter-spacing:0.38px">content</div><div class="t" style="left:400.0px;top:366px;font-family:'Liberation Mono';font-size:11px;line-height:19px;color:#444;letter-spacing:-0.3px">:</div><div class="t" style="left:410.0px;top:366px;font-family:'Liberation Mono';font-size:11px;line-height:19px;color:#000000;letter-spacing:-0.3px">'</div><div class="t" style="left:420.9px;top:366px;font-family:'Liberation Mono';font-size:11px;line-height:19px;color:#008000;font-weight:bold;letter-spacing:0.38px">|</div><div class="t" style="left:424.0px;top:366px;font-family:'Liberation Mono';font-size:11px;line-height:19px;color:#000000;letter-spacing:-0.3px">'</div><div class="t" style="left:433.0px;top:366px;font-family:'Liberation Mono';font-size:11px;line-height:19px;color:#000000;letter-spacing:-0.3px">;</div><div class="t" style="left:352.0px;top:385px;font-family:'Liberation Mono';font-size:11px;line-height:19px;color:#0000ff;font-weight:bold;letter-spacing:0.38px">display</div><div class="t" style="left:400.0px;top:385px;font-family:'Liberation Mono';font-size:11px;line-height:19px;color:#444;letter-spacing:-0.3px">:</div><div class="t" style="left:412.8px;top:385px;font-family:'Liberation Mono';font-size:11px;line-height:19px;color:#008000;font-weight:bold;letter-spacing:0.38px">inline-block</div><div class="t" style="left:497.0px;top:385px;font-family:'Liberation Mono';font-size:11px;line-height:19px;color:#000000;letter-spacing:-0.3px">;</div><div class="t" style="left:352.0px;top:404px;font-family:'Liberation Mono';font-size:11px;line-height:19px;color:#0000ff;font-weight:bold;letter-spacing:0.38px">background-color</div><div class="t" style="left:463.0px;top:404px;font-family:'Liberation Mono';font-size:11px;line-height:19px;color:#444;letter-spacing:-0.3px">:</div><div class="t" style="left:474.4px;top:404px;font-family:'Liberation Mono';font-size:11px;line-height:19px;color:#008000;font-weight:bold;letter-spacing:0.38px">red</div><div class="t" style="left:497.0px;top:404px;font-family:'Liberation Mono';font-size:11px;line-height:19px;color:#000000;letter-spacing:-0.3px">;</div><div class="t" style="left:350.9px;top:423px;font-family:'Liberation Mono';font-size:11px;line-height:19px;color:#000000;letter-spacing:-0.3px">.</div><div class="t" style="left:357.9px;top:423px;font-family:'Liberation Mono';font-size:11px;line-height:19px;color:#000080;font-weight:bold;letter-spacing:0.38px">size</div><div class="t" style="left:386.9px;top:423px;font-family:'Liberation Mono';font-size:11px;line-height:19px;color:#000000;letter-spacing:-0.3px">(</div><div class="t" style="left:391.9px;top:422px;font-family:'Liberation Mono';font-size:11.5px;line-height:19px;color:#0000ff;letter-spacing:0px;font-family:'Liberation Serif';-webkit-text-stroke:0.2px #10109a">100<span style="display:inline-block;transform:scaleX(0.6);transform-origin:0 0">%</span></div><div class="t" style="left:415.0px;top:423px;font-family:'Liberation Mono';font-size:11px;line-height:19px;color:#000000;letter-spacing:-0.3px">,</div><div class="t" style="left:421.9px;top:422px;font-family:'Liberation Mono';font-size:11.5px;line-height:19px;color:#0000ff;letter-spacing:0px;font-family:'Liberation Serif';-webkit-text-stroke:0.2px #10109a">100<span style="display:inline-block;transform:scaleX(0.6);transform-origin:0 0">%</span></div><div class="t" style="left:446.1px;top:423px;font-family:'Liberation Mono';font-size:11px;line-height:19px;color:#000000;letter-spacing:-0.3px">)</div><div class="t" style="left:451.7px;top:423px;font-family:'Liberation Mono';font-size:11px;line-height:19px;color:#000000;letter-spacing:-0.3px">;</div><div class="t" style="left:339.0px;top:442px;font-family:'Liberation Mono';font-size:11px;line-height:19px;color:#000000;letter-spacing:-0.3px">}</div><div class="t" style="left:327.3px;top:461px;font-family:'Liberation Mono';font-size:11px;line-height:19px;color:#000000;letter-spacing:-0.3px">}</div><div class="t" style="left:315.5px;top:480px;font-family:'Liberation Mono';font-size:11px;line-height:19px;color:#000000;letter-spacing:-0.3px">}</div><!--/CODE-->
<div id="status" class="a"></div>
<div class="a" style="left:8px;top:802px;width:169px;height:10px;background:#e6e6e6"></div>
<svg class="a" style="left:17px;top:817px" width="14" height="15" viewBox="0 0 14 15"><rect x="0.5" y="0.5" width="13" height="11" fill="#cfcfcf" stroke="#5a5a5a" stroke-width="1"/><path d="M3.5 1V11M10.5 1V11" stroke="#5a5a5a" stroke-width="1"/><rect x="4" y="1" width="6" height="10" fill="#c4c4c4"/><path d="M0 13.5H14" stroke="#5a5a5a" stroke-width="1"/></svg>
<div class="t" style="left:39px;top:816px;font-size:13.2px">Platform and Plugin Updates: WebStorm is ready to update.</div>
<div class="t" style="left:740px;top:816px;font-size:13.2px;letter-spacing:-0.3px">16:24</div>
<div class="t" style="left:782px;top:816px;font-size:13.2px;transform:scaleX(0.84);transform-origin:0 0">CRLF</div>
<div class="t" style="left:826px;top:816px;font-size:13.2px;letter-spacing:-0.5px">UTF-8</div>
<div class="t" style="left:877px;top:816px;font-size:13.2px;letter-spacing:-0.15px">Git: dev</div>
<svg class="a" style="left:811px;top:818px" width="6" height="11" viewBox="0 0 6 11"><path d="M0.5 4.5L3 1.5L5.5 4.5ZM0.5 6.5L3 9.5L5.5 6.5Z" fill="#444"/></svg><svg class="a" style="left:862px;top:818px" width="6" height="11" viewBox="0 0 6 11"><path d="M0.5 4.5L3 1.5L5.5 4.5ZM0.5 6.5L3 9.5L5.5 6.5Z" fill="#444"/></svg><svg class="a" style="left:923px;top:818px" width="6" height="11" viewBox="0 0 6 11"><path d="M0.5 4.5L3 1.5L5.5 4.5ZM0.5 6.5L3 9.5L5.5 6.5Z" fill="#444"/></svg>
<div class="a" style="left:928px;top:814px;width:30px;height:19px;background:#dc4a52"></div>
<div class="a" style="left:929px;top:815px;width:28px;height:17px;background:#f00;border-radius:50%"></div>
<div class="t" style="left:931px;top:813px;font-size:14px;font-style:italic;color:#fff;line-height:18px;letter-spacing:-0.6px">php</div>
<div class="a" style="left:958px;top:814px;width:50px;height:19px;background:#000"></div>

</body></html>
